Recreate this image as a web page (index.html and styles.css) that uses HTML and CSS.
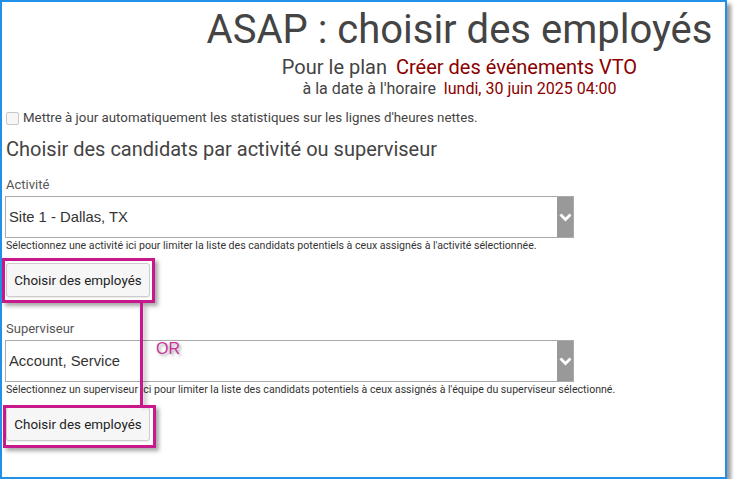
FILE: index.html
```html
<!DOCTYPE html>
<html lang="fr">
<head>
    <meta charset="UTF-8">
    <title>ASAP : choisir des employés</title>
    <link rel="stylesheet" href="styles.css">
</head>
<body>
    <div class="frame">
        <div class="header">
            <h1>ASAP : choisir des employés</h1>
            <div class="plan">Pour le plan <span class="accent">Créer des événements VTO</span></div>
            <div class="date">à la date à l'horaire <span class="accent">lundi, 30 juin 2025 04:00</span></div>
        </div>

        <label class="auto-update">
            <span class="check"></span>
            Mettre à jour automatiquement les statistiques sur les lignes d'heures nettes.
        </label>

        <h2>Choisir des candidats par activité ou superviseur</h2>

        <div class="field">
            <div class="field-label">Activité</div>
            <div class="select">
                <span class="select-value">Site 1 - Dallas, TX</span>
                <span class="select-arrow">
                    <svg width="13" height="9" viewBox="0 0 13 9"><path d="M1.5 1.5 L6.5 6.5 L11.5 1.5" fill="none" stroke="#fff" stroke-width="2.8"/></svg>
                </span>
            </div>
            <div class="help">Sélectionnez une activité ici pour limiter la liste des candidats potentiels à ceux assignés à l'activité sélectionnée.</div>
            <button class="pick-btn">Choisir des employés</button>
        </div>

        <div class="field">
            <div class="field-label">Superviseur</div>
            <div class="select">
                <span class="select-value">Account, Service</span>
                <span class="select-arrow">
                    <svg width="13" height="9" viewBox="0 0 13 9"><path d="M1.5 1.5 L6.5 6.5 L11.5 1.5" fill="none" stroke="#fff" stroke-width="2.8"/></svg>
                </span>
            </div>
            <div class="help">Sélectionnez un superviseur ici pour limiter la liste des candidats potentiels à ceux assignés à l'équipe du superviseur sélectionné.</div>
            <button class="pick-btn">Choisir des employés</button>
        </div>

        <!-- annotations drawn over the screenshot -->
        <div class="mark mark-top"></div>
        <div class="mark-line"></div>
        <div class="mark-or">OR</div>
        <div class="mark mark-bottom"></div>
    </div>
</body>
</html>
```

FILE: styles.css
```css
body {
    margin: 0;
    background-color: #fff;
    font-family: Roboto, "Liberation Sans", sans-serif;
    color: #444;
}

.frame {
    position: relative;
    box-sizing: border-box;
    width: 727px;
    height: 479px;
    padding: 0 4px;
    border: 2px solid #2090e8;
    background-color: #fff;
    box-shadow: 4px 4px 4px rgba(0, 0, 0, 0.4);
}

.header {
    margin-left: 192px;
    text-align: center;
    white-space: nowrap;
}

h1 {
    margin: 5px 0 0;
    font-size: 40px;
    line-height: 46px;
    font-weight: 400;
    color: #444;
}

.plan {
    margin-top: 2px;
    font-size: 20px;
    line-height: 24px;
}

.date {
    font-size: 16px;
    line-height: 20px;
}

.accent {
    margin-left: 4px;
    color: #8b0000;
}

.auto-update {
    display: flex;
    align-items: center;
    margin-top: 10px;
    font-size: 13.3px;
    line-height: 18px;
    color: #444;
}

.check {
    width: 11px;
    height: 11px;
    margin-right: 4px;
    border: 1px solid #c8c8c8;
    border-radius: 2px;
    background-color: #f6f6f6;
}

h2 {
    margin: 10px 0 0;
    font-size: 20px;
    line-height: 24px;
    font-weight: 400;
    color: #444;
}

.field {
    margin-top: 15px;
}

.field + .field {
    margin-top: 23px;
}

.field-label {
    font-size: 13px;
    line-height: 18px;
    color: #555;
}

.select {
    display: flex;
    box-sizing: border-box;
    width: 569px;
    height: 42px;
    margin: 2px 0 0 -1px;
    border: 1px solid #aaa;
    background-color: #fff;
}

.select-value {
    flex: 1;
    padding-left: 3px;
    font-family: "Liberation Sans", Arial, sans-serif;
    font-size: 14.8px;
    line-height: 40px;
    color: #333;
}

.select-arrow {
    display: flex;
    align-items: center;
    justify-content: center;
    width: 16px;
    background-color: #999;
}

.help {
    margin-top: 1px;
    font-size: 10.6px;
    line-height: 14px;
    color: #333;
}

.pick-btn {
    display: block;
    box-sizing: border-box;
    width: 144px;
    height: 34px;
    margin-top: 10px;
    border: 1px solid #ccc;
    border-radius: 3px;
    background-color: #f6f6f6;
    font-family: Roboto, "Liberation Sans", sans-serif;
    font-size: 13.4px;
    color: #222;
    box-shadow: 0 1px 1px rgba(0, 0, 0, 0.08);
}

.mark {
    position: absolute;
    left: 0;
    width: 153px;
    box-sizing: border-box;
    border: 3px solid #c8198c;
    box-shadow: 3px 3px 4px rgba(0, 0, 0, 0.35);
}

.mark-top {
    top: 256px;
    height: 45px;
}

.mark-bottom {
    top: 403px;
    left: 1px;
    height: 43px;
}

.mark-line {
    position: absolute;
    left: 138px;
    top: 301px;
    width: 3px;
    height: 102px;
    background-color: #c8198c;
    box-shadow: 3px 3px 4px rgba(0, 0, 0, 0.3);
}

.mark-or {
    position: absolute;
    left: 154px;
    top: 338px;
    font-family: "Liberation Sans", Arial, sans-serif;
    font-size: 16px;
    line-height: 18px;
    color: #c8329a;
    text-shadow: 2px 2px 3px rgba(0, 0, 0, 0.35);
}
```
